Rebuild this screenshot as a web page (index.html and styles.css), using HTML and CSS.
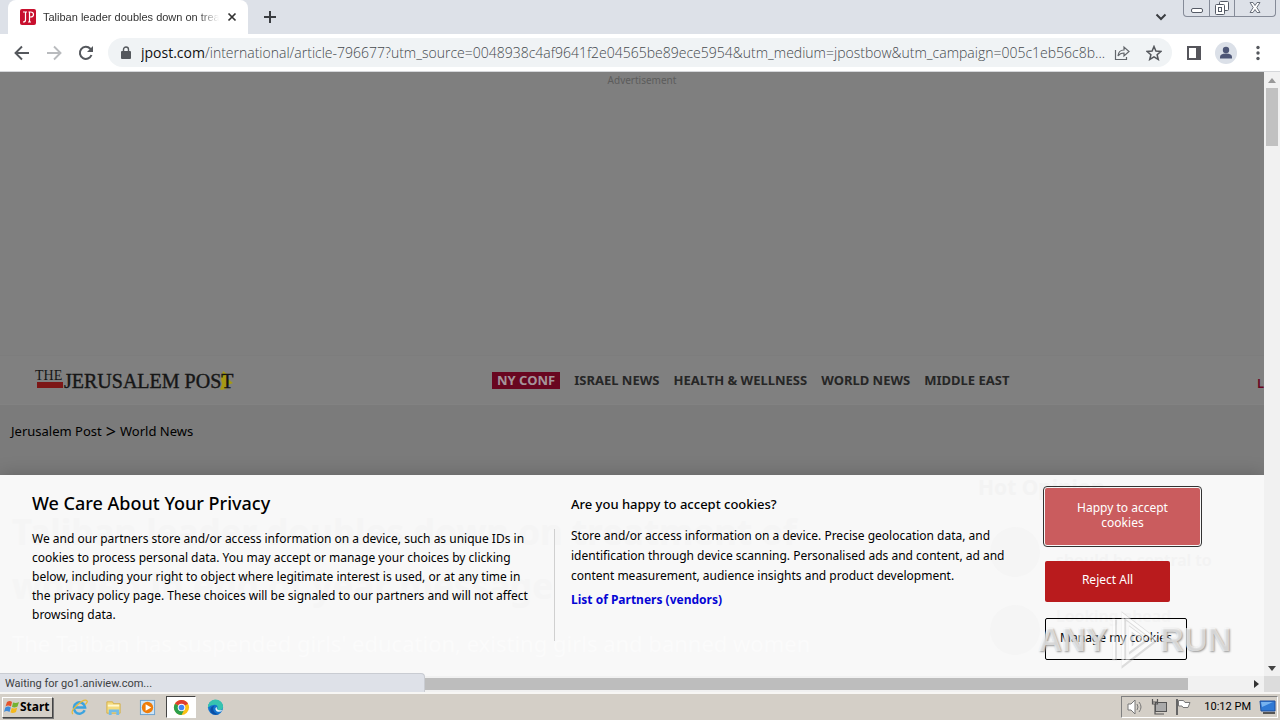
FILE: index.html
```html
<!DOCTYPE html>
<html lang="en">
<head>
<meta charset="utf-8">
<title>Taliban leader doubles down on treatment of women</title>
<link rel="stylesheet" href="styles.css">
</head>
<body>
<header class="tabstrip">
  <div class="tab">
    <svg class="favicon" viewBox="0 0 16 16"><rect width="16" height="16" rx="2" fill="#c8102e"/><path d="M3 3h4M5.500 3v8q0 2-2.500 2M8.500 3h2q3 0 3 2.500t-3 2.500h-1M9.500 3v10M8 13h3" fill="none" stroke="#fff" stroke-width="1.200"/></svg>
    <span class="tab-title">Taliban leader doubles down on treat</span>
    <button class="icon-btn tab-close" aria-label="Close tab"><svg viewBox="0 0 10 10"><path d="M1.500 1.500l7 7m0-7l-7 7" stroke="#333" stroke-width="1.700"/></svg></button>
  </div>
  <button class="icon-btn new-tab" aria-label="New tab"><svg viewBox="0 0 12 12"><path d="M6 0v12M0 6h12" stroke="#3a3d41" stroke-width="2"/></svg></button>
  <button class="icon-btn tab-search" aria-label="Search tabs"><svg viewBox="0 0 12 12"><path d="M1.500 3.500L6 8l4.500-4.500" fill="none" stroke="#3a3d41" stroke-width="2"/></svg></button>
  <div class="window-controls">
    <button aria-label="Minimize"><svg viewBox="0 0 14 14"><rect x="1.500" y="7.500" width="11" height="4" rx="1.500" fill="#fff" stroke="#555b66"/></svg></button>
    <button aria-label="Restore"><svg viewBox="0 0 14 14"><rect x="4.500" y=".5" width="9" height="9" rx="1" fill="#fff" stroke="#555b66"/><rect x=".5" y="3.500" width="9" height="10" rx="1" fill="#fff" stroke="#555b66"/><rect x="3.500" y="6.500" width="3" height="4" fill="none" stroke="#555b66"/></svg></button>
    <button class="wide" aria-label="Close"><svg viewBox="0 0 14 14"><path d="M2 1.500h3l2 3 2-3h3L8.800 6.500l3.200 5H9l-2-3-2 3H2l3.200-5z" fill="#fff" stroke="#6a707b"/></svg></button>
  </div>
</header>
<nav class="toolbar">
  <button class="icon-btn" aria-label="Back"><svg viewBox="0 0 16 16"><path d="M15 8H2M8 1.500L1.500 8 8 14.500" fill="none" stroke="#55585d" stroke-width="1.900"/></svg></button>
  <button class="icon-btn" aria-label="Forward"><svg viewBox="0 0 16 16"><path d="M1 8h13M8 1.500L14.500 8 8 14.500" fill="none" stroke="#b9bbbe" stroke-width="1.900"/></svg></button>
  <button class="icon-btn" aria-label="Reload"><svg viewBox="0 0 16 16"><path d="M13.500 10A6 6 0 1 1 12.300 3.800L14 5.500" fill="none" stroke="#55585d" stroke-width="2"/><path d="M15 1v6H9z" fill="#55585d"/></svg></button>
  <div class="omnibox">
    <svg class="lock" viewBox="0 0 10 14"><rect x="0" y="5" width="10" height="8" rx="1" fill="#55585d"/><path d="M2.500 6V3.500a2.500 2.500 0 0 1 5 0V6" fill="none" stroke="#55585d" stroke-width="1.400"/></svg>
    <span class="url"><b>jpost.com</b>/international/article-796677?utm_source=0048938c4af9641f2e04565be89ece5954&amp;utm_medium=jpostbow&amp;utm_campaign=005c1eb56c8b...</span>
    <button class="icon-btn" aria-label="Share"><svg viewBox="0 0 16 16"><path d="M1.500 5v9.500h11V12M4 11q.5-6 6-6V2l5 4.500L10 11V8Q6 8 4 11z" fill="none" stroke="#62666b" stroke-width="1.200"/></svg></button>
    <button class="icon-btn" aria-label="Bookmark"><svg viewBox="0 0 16 16"><path d="M8 1.500l1.900 4.600 4.900.4-3.700 3.200 1.200 4.800L8 11.900l-4.300 2.600 1.200-4.800L1.200 6.500l4.900-.4z" fill="none" stroke="#55585d" stroke-width="1.500"/></svg></button>
  </div>
  <button class="icon-btn" aria-label="Side panel"><svg viewBox="0 0 16 16"><rect x="2" y="2" width="12" height="12" fill="#fff" stroke="#55555b" stroke-width="2"/><path d="M10 2h5v12h-5z" fill="#55555b"/></svg></button>
  <button class="icon-btn avatar" aria-label="Profile"><svg viewBox="0 0 16 16"><circle cx="8" cy="5" r="3.200" fill="#4d5676"/><path d="M2 13.500v-1.500q0-3.500 6-3.500t6 3.500v1.500z" fill="#4d5676"/></svg></button>
  <button class="icon-btn" aria-label="Menu"><svg viewBox="0 0 16 16"><circle cx="8" cy="2.500" r="1.700" fill="#55585d"/><circle cx="8" cy="8" r="1.700" fill="#55585d"/><circle cx="8" cy="13.500" r="1.700" fill="#55585d"/></svg></button>
</nav>
<div class="viewport">
  <main class="page">
    <div class="ad">Advertisement</div>
    <div class="masthead">
      <svg class="logo" viewBox="0 0 200 28" role="img" aria-label="The Jerusalem Post"><text x="1" y="14" class="logo-the">THE</text><rect x="3" y="16" width="26" height="6" fill="#7d1717"/><path d="M189 5l4 3 1 5 5 4-5 2-2 4-6 1 2-6-1-5z" fill="#a59a14"/><text x="30" y="22" class="logo-main">JERUSALEM POST</text></svg>
      <nav class="sections">
        <a class="hot" href="#">NY CONF</a><a href="#">ISRAEL NEWS</a><a href="#">HEALTH &amp; WELLNESS</a><a href="#">WORLD NEWS</a><a href="#">MIDDLE EAST</a>
      </nav>
      <a class="login" href="#">L</a>
    </div>
    <div class="crumbs"><a href="#">Jerusalem Post</a><span>&gt;</span><a href="#">World News</a></div>
  </main>
  <section class="consent" aria-label="Privacy">
    <div class="ghost" aria-hidden="true">
      <div class="ghost-title">Taliban leader doubles down on treatment of<br>women in end of year message</div>
      <div class="ghost-sub">The Taliban has suspended girls' education, existing girls and banned women</div>
    </div>
    <div class="ghost-side" aria-hidden="true"><div class="ghost-hot">Hot Opinion</div><div class="ghost-row"><i></i><span>Anti-Israel bias<br>should be central to</span></div><div class="ghost-row"><i></i><span>Looking ahead</span></div></div>
    <div class="privacy">
      <h2>We Care About Your Privacy</h2>
      <p>We and our partners store and/or access information on a device, such as unique IDs in<br>cookies to process personal data. You may accept or manage your choices by clicking<br>below, including your right to object where legitimate interest is used, or at any time in<br>the privacy policy page. These choices will be signaled to our partners and will not affect<br>browsing data.</p>
    </div>
    <div class="purposes">
      <h3>Are you happy to accept cookies?</h3>
      <p>Store and/or access information on a device. Precise geolocation data, and<br>identification through device scanning. Personalised ads and content, ad and<br>content measurement, audience insights and product development.</p>
      <a href="#">List of Partners (vendors)</a>
    </div>
    <div class="choices">
      <button class="accept">Happy to accept<br>cookies</button>
      <button class="reject">Reject All</button>
      <button class="manage">Manage my cookies</button>
    </div>
    <div class="watermark" aria-hidden="true"><span>ANY</span><svg viewBox="0 0 52 64"><path d="M5 10v44M15 6v52l34-26zM23 21v22l15-11z" fill="none" stroke="#aaa" stroke-width="5" opacity=".6"/><path d="M4 9v44M14 5v52l34-26zM22 20v22l15-11z" fill="none" stroke="#fff" stroke-width="3"/></svg><span>RUN</span></div>
  </section>
  <div class="vscroll"><svg viewBox="0 0 16 16"><path d="M4 11h8L8 6z" fill="#999"/></svg><div class="vthumb"></div><svg class="end" viewBox="0 0 16 16"><path d="M4 6h8l-4 5z" fill="#444"/></svg></div>
  <div class="hscroll"><div class="hthumb"></div><svg viewBox="0 0 16 16"><path d="M6 4v8l5-4z" fill="#333"/></svg></div>
  <div class="corner"></div>
  <div class="status">Waiting for go1.aniview.com...</div>
</div>
<footer class="taskbar">
  <button class="start"><svg viewBox="0 0 16 16"><path d="M3 3q3-2 5 0L7 7.500q-3-2-5.500 0z" fill="#e5532b"/><path d="M9 3.500q3 1 6-.5l-1.500 4.500q-3 1.500-5.500.5z" fill="#74b230"/><path d="M1.300 8.500q3-2 5.500 0L5.500 13q-3-2-5.500 0z" fill="#3f8bd9"/><path d="M7.700 9q3 1 5.500-.5L12 13q-3 1.500-5.500.5z" fill="#f4b81c"/></svg>Start</button>
  <button class="app" aria-label="Internet Explorer"><svg viewBox="0 0 18 18"><path d="M14.500 12A6 6 0 1 1 15 9H4.500" fill="none" stroke="#3ba3df" stroke-width="2.600"/><path d="M2 16Q-1 13 7 6t10-4q1 1-2 4" fill="none" stroke="#e7bb3a" stroke-width="1.300"/></svg></button>
  <button class="app" aria-label="Explorer"><svg viewBox="0 0 18 18"><path d="M2 3h6l1 2h7v10H2z" fill="#f5dc7e" stroke="#d4af48"/><path d="M3 7h12" stroke="#fff8d0" stroke-width="2"/><path d="M4 17v-6h11v6h-3v-3H7v3z" fill="#72bce8"/></svg></button>
  <button class="app" aria-label="Media Player"><svg viewBox="0 0 18 18"><rect x="1.500" y="1.500" width="15" height="15" fill="#cde5f8" stroke="#6ba1ce"/><circle cx="9" cy="9" r="6" fill="#ef7d0b"/><path d="M7 5.500v7L13 9z" fill="#fff"/></svg></button>
  <button class="app active" aria-label="Chrome"><svg viewBox="0 0 18 18"><circle cx="9" cy="9" r="8" fill="#fbc116"/><path d="M9 9L2.070 5A8 8 0 0 1 15.930 5z" fill="#df3e30"/><path d="M9 9L2.070 5A8 8 0 0 0 9 17l3-6z" fill="#2c9f4b"/><circle cx="9" cy="9" r="4" fill="#fff"/><circle cx="9" cy="9" r="3" fill="#4285f4"/></svg></button>
  <button class="app" aria-label="Edge"><svg viewBox="0 0 18 18"><circle cx="9" cy="9" r="8" fill="#1474cf"/><path d="M1 9a8 8 0 0 1 16-1q0 4-4 4-3 0-2-2 1-4-3-4-4 0-7 3z" fill="#36c3b0"/><path d="M8 7q-3 3 0 7 3 3 6 1-6 4-10-1-2-5 4-7z" fill="#0b4fa5"/><path d="M10.500 8.500q-1 3 3 3.500h3q-2 2-5 1.500-3-1-2.500-4z" fill="#e8f6fb"/></svg></button>
  <div class="tray">
    <svg viewBox="0 0 18 18"><path d="M2 6h3l4-4v14l-4-4H2z" fill="#fff" stroke="#777"/><path d="M11 6q2 3 0 6M13 4q4 5 0 10" fill="none" stroke="#777"/></svg>
    <svg viewBox="0 0 18 18"><rect x="5.500" y="4.500" width="11" height="9" fill="#aaa" stroke="#555"/><path d="M2.500 1v5h5V1M2.500 4h5M5 6v10h9" fill="none" stroke="#555" stroke-width="1.200"/></svg>
    <svg viewBox="0 0 18 18"><path d="M3 1v16" stroke="#666" stroke-width="2"/><path d="M4.500 2.500h5l1.500 2h5l-2 5h-5l-1-1.500H4.500z" fill="#fff" stroke="#777"/></svg>
    <time>10:12 PM</time>
    <svg viewBox="0 0 18 18"><path d="M1 3h15v10H2z" fill="#2f79d4" stroke="#1e4f9d"/><path d="M2 4h12L3 9z" fill="#76b2ef"/><path d="M4 15h12" stroke="#555" stroke-width="2"/></svg>
  </div>
</footer>
</body>
</html>
```
FILE: styles.css
```css
* { box-sizing: border-box; }
body { margin: 0; height: 100vh; display: flex; flex-direction: column; overflow: hidden; font-family: "Noto Sans", "Open Sans", sans-serif; color: #000; }
button { font: inherit; border: 0; background: none; padding: 0; margin: 0; }
a { color: inherit; text-decoration: none; }
h2, h3, p { margin: 0; }
svg { display: block; }

.tabstrip { flex: none; height: 34px; background: #dde1e8; display: flex; align-items: center; }
.tab { align-self: stretch; width: 240px; margin-left: 8px; padding: 0 11px 0 12px; display: flex; align-items: center; background: #fff; border-radius: 8px 8px 0 0; }
.favicon { width: 16px; height: 16px; flex: none; }
.tab-title { flex: 1; margin-left: 7px; font: 11px/16px "Liberation Sans", sans-serif; white-space: nowrap; overflow: hidden; color: #333; mask-image: linear-gradient(90deg, #000 88%, transparent); }
.icon-btn { width: 16px; height: 16px; flex: none; }
.icon-btn svg { width: 100%; height: 100%; }
.tab-close { width: 10px; height: 10px; margin-left: 8px; }
.new-tab { width: 12px; height: 12px; margin-left: 16px; }
.tab-search { width: 12px; height: 12px; margin-left: auto; margin-right: 16px; }
.window-controls { align-self: flex-start; display: flex; height: 17px; margin-right: 4px; border: 1px solid #858b98; border-top: 0; border-radius: 0 0 4px 4px; }
.window-controls button { width: 25px; display: flex; align-items: center; justify-content: center; }
.window-controls button + button { border-left: 1px solid #858b98; }
.window-controls .wide { width: 41px; }
.window-controls svg { width: 14px; height: 14px; }

.toolbar { flex: none; height: 38px; display: flex; align-items: center; gap: 16px; padding: 0 14px; background: #fff; border-bottom: 1px solid #d5d7da; }
.omnibox { flex: 1; min-width: 0; height: 29px; margin: 0 -2px; padding: 0 10px 0 13px; border-radius: 15px; background: #f0f3f5; display: flex; align-items: center; gap: 16px; }
.lock { width: 10px; height: 14px; flex: none; }
.url { flex: 1; min-width: 0; margin: 0 -12px 0 -6px; overflow: hidden; white-space: nowrap; font: 300 14px/20px "Open Sans", "Noto Sans", sans-serif; color: #45494d; }
.url b { font-weight: 400; color: #111; }
.avatar { width: 22px; height: 22px; margin: 0 -3px; padding: 3px; border-radius: 50%; background: #dbe0e8; }

.viewport { flex: 1; min-height: 0; position: relative; display: grid; grid-template: minmax(0, 1fr) 16px / minmax(0, 1fr) 16px; }
.page { grid-area: 1 / 1; background: #7f7f7f; display: flex; flex-direction: column; overflow: hidden; }
.ad { flex: none; height: 283px; padding-left: 20px; text-align: center; font-size: 10px; line-height: 16px; color: #5c5c5c; }
.masthead { flex: none; height: 50px; padding-left: 34px; display: flex; align-items: center; background: #808080; border-top: 1px solid #7d7d7d; border-bottom: 1px solid #828282; }
.logo { width: 200px; height: 28px; flex: none; fill: #161616; font-family: "Liberation Serif", serif; }
.logo-the { font-size: 14px; }
.logo-main { font-size: 20px; stroke: #161616; stroke-width: 0.4px; }
.sections { display: flex; gap: 14px; margin-left: 258px; font-size: 13px; line-height: 17px; font-weight: 700; color: #262626; white-space: nowrap; }
.hot { background: #690620; color: #a5949a; padding: 0 5px; }
.login { margin-left: auto; color: #690620; font-size: 13px; font-weight: 600; padding-top: 6px; }
.crumbs { flex: 1; display: flex; align-items: flex-start; gap: 4px; padding: 15px 11px; background: #7b7b7b; font-size: 13px; line-height: 22px; }
.crumbs span { font-size: 18px; }

.consent { grid-area: 1 / 1; align-self: end; z-index: 1; position: relative; height: 201px; display: grid; grid-template-columns: 539px 1fr 219px; background: #f8f8f8; box-shadow: 0 0 18px rgba(0,0,0,.2); clip-path: inset(-20px 0 0 0); }
.privacy, .purposes, .choices { position: relative; }
.privacy { padding: 16px 0 0 32px; white-space: nowrap; }
.privacy h2 { font-size: 18px; line-height: 24px; font-weight: 500; }
.privacy p { margin-top: 14px; font-size: 12px; line-height: 19px; }
.purposes { padding: 19px 0 0 32px; white-space: nowrap; }
.purposes::before { content: ""; position: absolute; left: 15px; top: 54px; height: 112px; border-left: 1px solid #d0d0d0; }
.purposes h3 { font-size: 13px; line-height: 20px; font-weight: 500; }
.purposes p { margin-top: 12px; font-size: 12px; line-height: 20px; }
.purposes a { display: inline-block; margin-top: 4px; font-size: 12px; line-height: 20px; font-weight: 700; color: #0505d5; }
.choices { display: flex; flex-direction: column; align-items: flex-start; padding-top: 13px; font-size: 12px; line-height: 15px; }
.choices button { border-radius: 2px; }
.accept { width: 155px; height: 57px; background: #ca5c5e; color: #fff; outline: 1px solid #333; outline-offset: 1px; padding-bottom: 4px; }
.reject { width: 125px; height: 41px; margin-top: 16px; background: #b91b1d; color: #fff; padding-bottom: 4px; }
.choices .manage { width: 142px; height: 42px; margin-top: 16px; border: 1px solid #000; padding-bottom: 3px; }
.ghost { position: absolute; left: 12px; top: 30px; color: #f5f5f5; white-space: nowrap; }
.ghost-title { font-size: 35px; line-height: 54px; font-weight: 700; }
.ghost-sub { margin-top: 14px; font-size: 22px; line-height: 32px; color: #fbfbfb; }
.ghost-side { position: absolute; left: 978px; top: 0; color: #f3f3f3; font-size: 16px; line-height: 22px; font-weight: 600; }
.ghost-hot { font-size: 21px; line-height: 24px; font-weight: 700; }
.ghost-row { display: flex; gap: 16px; margin: 28px 0 0 12px; white-space: nowrap; }
.ghost-row i { width: 50px; height: 50px; border-radius: 50%; background: #f5f5f5; }
.watermark { position: absolute; left: 1038px; top: 133px; height: 64px; display: flex; align-items: center; gap: 2px; font: 700 33px/64px "Liberation Sans", sans-serif; color: rgba(255,255,255,.6); text-shadow: 1px 1px 2px #999; pointer-events: none; }
.watermark svg { width: 48px; height: 60px; opacity: .6; }

.vscroll { grid-area: 1 / 2; display: flex; flex-direction: column; align-items: center; background: #f1f1f1; }
.vscroll svg, .hscroll svg { width: 16px; height: 16px; flex: none; }
.vthumb { width: 12px; height: 58px; background: #c1c1c1; }
.end { margin-top: auto; }
.hscroll { grid-area: 2 / 1; display: flex; align-items: center; justify-content: space-between; background: #f1f1f1; }
.hthumb { width: 94%; height: 12px; background: #bdbdbd; }
.corner { grid-area: 2 / 2; background: #dcdcdc; }
.status { position: absolute; z-index: 2; left: 0; bottom: 0; width: 425px; height: 19px; padding-left: 5px; font: 11px/19px Roboto, sans-serif; color: #3d3f42; background: #dee1e8; border: 1px solid #c9ccd2; border-left: 0; border-bottom: 0; border-radius: 0 4px 0 0; }

.taskbar { flex: none; height: 28px; display: flex; align-items: center; padding: 0 2px; background: #d4cfc7; border-top: 2px solid #f7f6f4; }
.start { width: 51px; height: 21px; padding-left: 1px; display: flex; align-items: center; font-size: 12px; line-height: 16px; font-weight: 700; background: #d4cfc7; border: 1px solid; border-color: #fff #444 #444 #fff; box-shadow: 1px 1px 0 #777; margin-right: 11px; }
.start svg { width: 16px; height: 16px; flex: none; }
.app { width: 30px; height: 22px; margin-right: 4px; display: flex; align-items: center; justify-content: center; }
.app svg { width: 17px; height: 17px; }
.active { background: #fff; border: 1px solid; border-color: #444 #fff #fff #444; }
.tray { margin-left: auto; height: 22px; padding: 0 0 0 4px; display: flex; align-items: center; gap: 6px; border: 1px solid; border-color: #808080 #fff #fff #808080; font: 11px/16px Roboto, sans-serif; }
.tray svg { width: 18px; height: 18px; }
.tray time { margin: 0 2px 0 6px; white-space: nowrap; }
```
